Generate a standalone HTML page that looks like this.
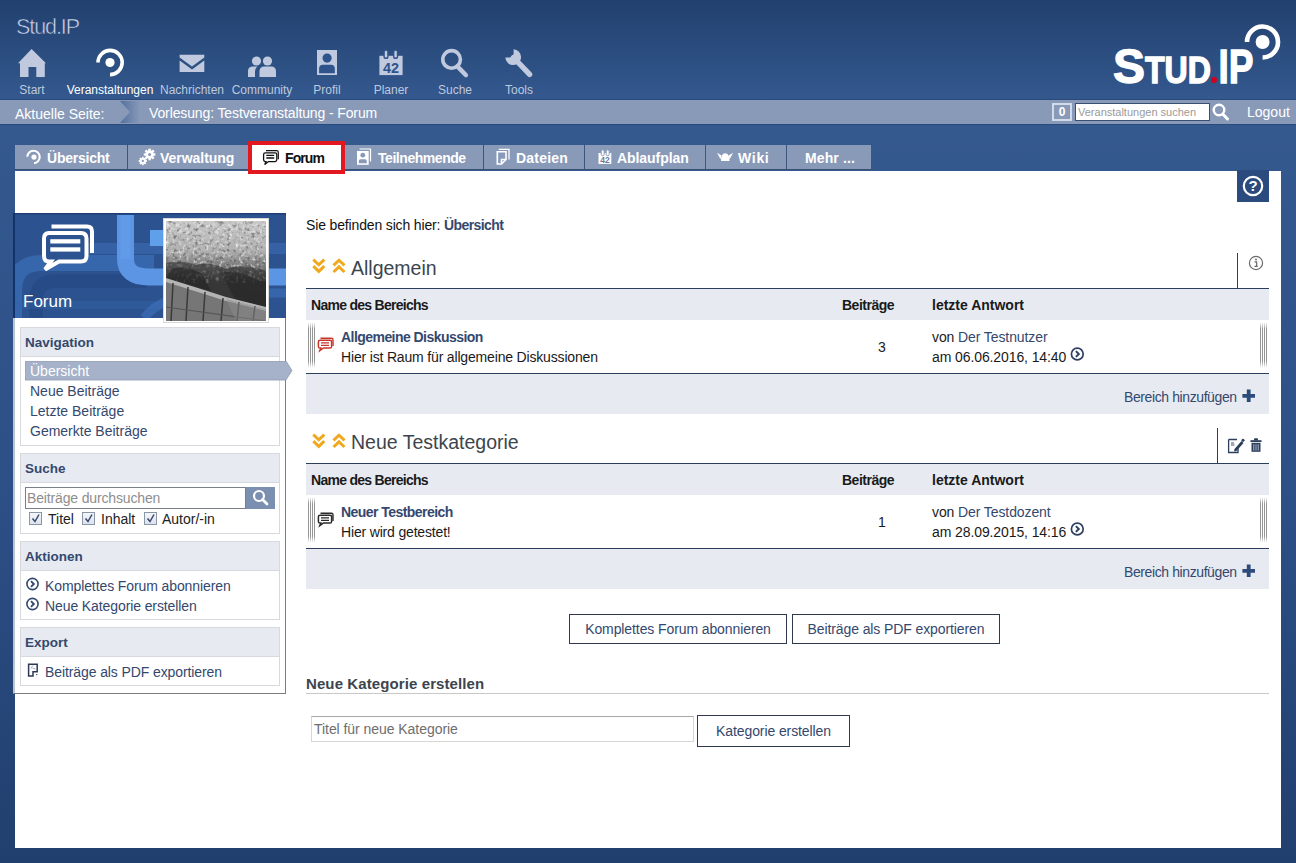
<!DOCTYPE html>
<html><head><meta charset="utf-8">
<style>
*{box-sizing:border-box;margin:0;padding:0}
html,body{width:1296px;height:863px;overflow:hidden}
body{position:relative;font-family:"Liberation Sans",sans-serif;font-size:14px;color:#000;
background:linear-gradient(to bottom,#21406e 0px,#34598f 100px,#34598f 124px,#2c4f86 500px,#213f6e 863px);}
.abs{position:absolute}
#bar{left:0;top:99px;width:1296px;height:26px;background:#899ab9;border-top:1px solid #2b4a7c;border-bottom:1px solid #2b4a7c}
.wt{color:#fff}
#content{left:15px;top:171px;width:1266px;height:677px;background:#fff}
.nav{position:absolute;top:0;text-align:center;color:#c3cce0;font-size:12px}
.navlbl{position:absolute;top:83px;font-size:12px;color:#bfc9de;white-space:nowrap;transform:translateX(-50%)}
.tab{position:absolute;top:145px;height:25px;background:#899ab9;color:#fff;font-weight:bold;font-size:14px;letter-spacing:-0.45px;border-bottom:1px solid #3b4f75}
.tab span{position:absolute;top:5px;white-space:nowrap}
.tsep{position:absolute;top:145px;width:1px;height:25px;background:#3d5580}
.wg{position:absolute;left:20px;width:260px;border:1px solid #d6d9de;background:#fff}
.wgh{height:29px;background:#e7ebf1;border-bottom:1px solid #d6d9de;color:#34486e;font-weight:bold;font-size:13.5px;padding:7px 0 0 4px}
.lnk{color:#34486e}
.th{position:absolute;font-weight:bold;font-size:13.5px;color:#1a1a1a;white-space:nowrap}
.t{position:absolute;white-space:nowrap}
.btn{border:1px solid #2f3a4f;background:#fff;color:#34486e;font-size:14px;letter-spacing:-0.1px;text-align:center;line-height:28px;white-space:nowrap}
.cb{width:13px;height:13px;border:1px solid #8a96a8;background:linear-gradient(#f4f6f9,#dde3ec)}
</style></head>
<body>
<!-- header -->
<svg class="abs" style="left:0;top:0" width="1296" height="100" viewBox="0 0 1296 100">
 <g fill="#c0c9de">
  <!-- home -->
  <path d="M31.6 49 L18 63.3 L20 63.3 L20 77 L28.5 77 L28.5 67 L36.3 67 L36.3 77 L44.8 77 L44.8 63.3 L46 63.3 Z"/>
  <!-- mail -->
  <path d="M179.6 54.7 H204.3 V57.5 L192 66.5 L179.6 57.5 Z"/>
  <path d="M179.6 60.5 L192 69.5 L204.3 60.5 V72 H179.6 Z"/>
  <!-- community -->
  <circle cx="256.5" cy="61" r="4.6"/>
  <circle cx="267.5" cy="61" r="4.6"/>
  <path d="M248 77 V71 Q248 66.5 253 66.5 H257.5 Q255 68 255 72 V77 Z"/>
  <path d="M259.5 77 V71.5 Q259.5 66.5 264.5 66.5 H271 Q276 66.5 276 71.5 V77 Z"/>
  <!-- profil -->
  <rect x="317" y="50" width="20" height="25"/>
  <!-- planer -->
  <rect x="379.4" y="55.8" width="23.2" height="19.3"/>
  <!-- suche -->
  <circle cx="451.6" cy="59.4" r="8.8" fill="none" stroke="#c0c9de" stroke-width="3.6"/>
  <path d="M457.5 66.5 L465.8 75" stroke="#c0c9de" stroke-width="4.6" stroke-linecap="round"/>
  <!-- tools -->
  <path d="M513.5 57.5 L529.6 74.3" stroke="#c0c9de" stroke-width="5.4" stroke-linecap="round"/>
  <path d="M513.6 49.3 A7.9 7.9 0 1 1 505.3 57.6 L510.2 57.6 L513.6 54.2 Z"/>
 </g>
 <g fill="#2f548b">
  <circle cx="327.1" cy="58.1" r="4.6"/>
  <path d="M319.1 73.2 V68.5 Q319.1 64.7 323 64.7 H331 Q334.8 64.7 334.8 68.5 V73.2 Z"/>
  <rect x="383.4" y="49.5" width="5.2" height="9.5" rx="2.6"/>
  <rect x="393" y="49.5" width="5.2" height="9.5" rx="2.6"/>
 </g>
 <g fill="#c0c9de">
  <rect x="384.8" y="50.8" width="2.4" height="6.7" rx="1.2"/>
  <rect x="394.4" y="50.8" width="2.4" height="6.7" rx="1.2"/>
 </g>
 <text x="391" y="72.8" font-family="Liberation Sans" font-weight="bold" font-size="14" fill="#2f548b" text-anchor="middle" textLength="16" lengthAdjust="spacingAndGlyphs">42</text>
 <!-- veranstaltungen ring -->
 <path d="M98 62.5 A12.1 12.1 0 1 1 110 74.6" fill="none" stroke="#fff" stroke-width="3.6"/>
 <circle cx="110" cy="62.5" r="4.6" fill="#fff"/>
 <!-- logo -->
 <g fill="#fff" stroke="#fff" stroke-width="1.3" font-family="Liberation Sans" font-weight="bold">
  <text x="1113" y="83.3" font-size="48" textLength="32" lengthAdjust="spacingAndGlyphs">S</text>
  <text x="1145" y="83.3" font-size="36.5" textLength="66" lengthAdjust="spacingAndGlyphs">TUD</text>
  <text x="1218.5" y="83.3" font-size="48" textLength="35" lengthAdjust="spacingAndGlyphs">IP</text>
 </g>
 <circle cx="1214" cy="80" r="3" fill="#d0021b"/>
 <path d="M1247 42 A15.5 15.5 0 1 1 1262.6 57.5" fill="none" stroke="#fff" stroke-width="4.6"/>
 <circle cx="1262.6" cy="42" r="7" fill="#fff"/>
</svg>

<svg class="abs" style="left:0;top:0" width="120" height="45" viewBox="0 0 120 45"><text x="16" y="34" font-family="Liberation Sans" font-size="21.5" fill="#d0d8ea" stroke="#27477c" stroke-width="0.55" textLength="64" lengthAdjust="spacing">Stud.IP</text></svg>

<div class="navlbl" style="left:32px">Start</div>
<div class="navlbl" style="left:110px;color:#fff">Veranstaltungen</div>
<div class="navlbl" style="left:192px">Nachrichten</div>
<div class="navlbl" style="left:262px">Community</div>
<div class="navlbl" style="left:327px">Profil</div>
<div class="navlbl" style="left:391px">Planer</div>
<div class="navlbl" style="left:455px">Suche</div>
<div class="navlbl" style="left:519px">Tools</div>

<div id="bar" class="abs"></div>
<div class="abs wt" style="left:15px;top:106px;font-size:14px">Aktuelle Seite:</div>
<div class="abs wt" style="left:149px;top:105px;font-size:14px;letter-spacing:-0.12px">Vorlesung: Testveranstaltung - Forum</div>

<!-- bar chevron -->
<svg class="abs" style="left:118px;top:101px" width="22" height="22" viewBox="0 0 22 22">
 <defs><linearGradient id="chg" x1="0" x2="1" y1="0" y2="0"><stop offset="0" stop-color="#4e6b9c"/><stop offset="1" stop-color="#899ab9"/></linearGradient></defs>
 <rect x="0" y="0" width="22" height="22" fill="url(#chg)"/>
 <path d="M0 0 L2 0 L12 11 L2 22 L0 22 Z" fill="#899ab9"/>
</svg>
<div class="abs" style="left:1052px;top:103px;width:20px;height:18px;border:2px solid #d3dbeb;color:#fff;font-size:12px;font-weight:bold;text-align:center;line-height:15px">0</div>
<div class="abs" style="left:1075px;top:103px;width:135px;height:18px;border:1px solid #3a4f74;background:#fff;color:#9a9a9a;font-size:11px;line-height:16px;padding-left:2px;white-space:nowrap;overflow:hidden">Veranstaltungen suchen</div>
<svg class="abs" style="left:1212px;top:103px" width="18" height="19" viewBox="0 0 18 19">
 <circle cx="7" cy="7" r="5.3" fill="none" stroke="#fff" stroke-width="2.4"/>
 <path d="M10.8 11 L15.5 16" stroke="#fff" stroke-width="3" stroke-linecap="round"/>
</svg>
<div class="abs wt" style="left:1247px;top:104px;font-size:14px">Logout</div>

<!-- tabs -->
<div class="tab" style="left:15px;width:113px"><span style="left:32px;letter-spacing:-0.23px">Übersicht</span></div>
<div class="tab" style="left:128px;width:120px"><span style="left:32px;letter-spacing:-0.03px">Verwaltung</span></div>
<div class="tab" style="left:345px;width:139px"><span style="left:33px">Teilnehmende</span></div>
<div class="tab" style="left:484px;width:101px"><span style="left:32px;letter-spacing:0.22px">Dateien</span></div>
<div class="tab" style="left:585px;width:121px"><span style="left:32px;letter-spacing:-0.06px">Ablaufplan</span></div>
<div class="tab" style="left:706px;width:81px"><span style="left:32px;letter-spacing:0.7px">Wiki</span></div>
<div class="tab" style="left:787px;width:84px"><span style="left:18px;letter-spacing:0.12px">Mehr ...</span></div>
<div class="tsep" style="left:127px"></div>
<div class="tsep" style="left:483px"></div>
<div class="tsep" style="left:584px"></div>
<div class="tsep" style="left:705px"></div>
<div class="tsep" style="left:786px"></div>

<div id="content" class="abs"></div>


<!-- sidebar -->
<div class="abs" style="left:13px;top:214px;width:273px;height:480px;background:#fff;border-right:1px solid #7d7d7d;border-bottom:1px solid #7d7d7d"></div>
<div class="abs" style="left:13px;top:318px;width:2px;height:375px;background:#bcc4d0"></div>
<svg class="abs" style="left:13px;top:213px" width="273" height="105" viewBox="-1 0 273 105">
 <defs>
  <filter id="nz"><feTurbulence type="fractalNoise" baseFrequency="0.22" numOctaves="3" seed="7"/><feColorMatrix type="matrix" values="0 0 0 0 0  0 0 0 0 0  0 0 0 0 0  -2.2 0 0 0 1.25"/></filter>
  <linearGradient id="pg" x1="0" y1="0" x2="0" y2="1">
   <stop offset="0" stop-color="#c9c9c9"/><stop offset="0.25" stop-color="#b0b0b0"/><stop offset="0.5" stop-color="#6a6a6a"/><stop offset="0.72" stop-color="#303030"/><stop offset="1" stop-color="#2a2a2a"/>
  </linearGradient>
 </defs>
 <rect x="0" y="0" width="272" height="105" fill="#2c5390"/>
 <rect x="0" y="0" width="272" height="1.5" fill="#1f3f74"/>
 <!-- lower-left rounded band -->
 <path d="M0 105 V78 Q0 50 28 50 H140" fill="none" stroke="#3a6cb6" stroke-width="16" opacity="0.75"/>
 <path d="M22 105 V88 Q22 68 42 68 H132" fill="none" stroke="#274a86" stroke-width="14" opacity="0.9"/>
 <!-- horizontal bands -->
 <rect x="60" y="30" width="212" height="11" fill="#3b69ae" opacity="0.7"/>
 <rect x="0" y="88" width="150" height="8" fill="#3366b0" opacity="0.35"/>
 <!-- light U -->
 <path d="M111.5 2 V46 Q111.5 64 135 64 H272" fill="none" stroke="#5b95e3" stroke-width="17"/>
 <path d="M111.5 2 V46" fill="none" stroke="#68a2ee" stroke-width="10" opacity="0.5"/>
 <rect x="136" y="17" width="16" height="16" fill="#60a0ea"/>
 <path d="M130 105 Q150 80 200 80 H272" fill="none" stroke="#3f72bf" stroke-width="9" opacity="0.6"/>
 <rect x="-1" y="0" width="2" height="105" fill="#13316a"/>
 <!-- forum icon big -->
 <g fill="none" stroke="#fff">
  <path d="M37.5 13.6 H73 Q78 13.6 78 18.6 V40" stroke-width="4"/>
  <path d="M35 20 H67 Q72.5 20 72.5 25.5 V43 Q72.5 48.5 67 48.5 H45 L31 56.5 L37 48.5 H35 Q30 48.5 30 43 V25.5 Q30 20 35 20 Z" stroke-width="4" fill="#2c5390"/>
 </g>
 <rect x="36.3" y="26.2" width="30" height="4.3" fill="#fff"/>
 <rect x="36.3" y="34.3" width="30" height="4.3" fill="#fff"/>
 <text x="9" y="93.8" font-family="Liberation Sans" font-size="17" fill="#fff">Forum</text>
</svg>
<!-- photo -->
<div class="abs" style="left:163px;top:218px;width:106px;height:105px;background:#fff;border:1px solid #d8d8d8"></div>
<svg class="abs" style="left:166px;top:221px" width="100" height="100" viewBox="0 0 100 100">
 <defs>
  <linearGradient id="pg2" x1="0" y1="0" x2="0" y2="1">
   <stop offset="0" stop-color="#c8c8c8"/><stop offset="0.3" stop-color="#b0b0b0"/><stop offset="0.45" stop-color="#7a7a7a"/><stop offset="0.6" stop-color="#474747"/><stop offset="1" stop-color="#3c3c3c"/>
  </linearGradient>
  <filter id="nzd" x="0" y="0" width="100%" height="100%"><feTurbulence type="fractalNoise" baseFrequency="0.28" numOctaves="2" seed="11"/><feColorMatrix type="matrix" values="0 0 0 0 0.05  0 0 0 0 0.05  0 0 0 0 0.05  -3 0 0 0 1.45"/></filter>
  <filter id="nzl" x="0" y="0" width="100%" height="100%"><feTurbulence type="fractalNoise" baseFrequency="0.3" numOctaves="2" seed="3"/><feColorMatrix type="matrix" values="0 0 0 0 0.95  0 0 0 0 0.95  0 0 0 0 0.95  3 0 0 0 -1.55"/></filter>
 </defs>
 <rect width="100" height="100" fill="url(#pg2)"/>
 <rect width="100" height="100" filter="url(#nzd)" opacity="0.6"/>
 <rect width="100" height="62" filter="url(#nzl)" opacity="0.7"/>
 <!-- dark people band -->
 <path d="M0 42 Q15 38 30 44 Q45 40 60 48 Q75 42 100 50 V90 L60 76 L30 68 L0 60 Z" fill="#2b2b2b" opacity="0.55"/>
 <path d="M5 48 Q20 44 35 52 L45 70 L0 58 Z" fill="#1e1e1e" opacity="0.5"/>
 <path d="M55 52 Q70 48 85 56 Q95 62 100 60 V88 L70 80 Z" fill="#1e1e1e" opacity="0.45"/>
 <!-- seat wall -->
 <path d="M0 59 L35 70 L60 78 L100 88 V100 H0 Z" fill="#767676"/>
 <path d="M0 57 L35 68 L60 76 L100 86 V90 L60 80 L35 72 L0 61 Z" fill="#b4b4b4"/>
 <g stroke="#3a3a3a" stroke-width="1.5"><path d="M7 62 L5 100 M22 66 L20 100 M39 71 L37 100 M57 77 L55 100 M73 81 L71 100 M89 85 L87 100"/></g>
 <path d="M0 86 L100 100" stroke="#555" stroke-width="1.2"/>
 <path d="M60 78 L100 88 V100 H70 Z" fill="#8c8c8c" opacity="0.5"/>
</svg>
<!-- widgets -->
<div class="wg" style="top:327px;height:119px">
 <div class="wgh">Navigation</div>
</div>
<svg class="abs" style="left:25px;top:361px" width="268" height="20" viewBox="0 0 268 20">
 <path d="M0 0 H261 L267 9.5 L261 19 H0 Z" fill="#a5b2c9" stroke="#8d9bb4" stroke-width="0.8"/>
</svg>
<div class="t" style="left:30px;top:363px;color:#fff;font-size:14px">Übersicht</div>
<div class="t lnk" style="left:30px;top:383px;font-size:14px">Neue Beiträge</div>
<div class="t lnk" style="left:30px;top:403px;font-size:14px">Letzte Beiträge</div>
<div class="t lnk" style="left:30px;top:423px;font-size:14px">Gemerkte Beiträge</div>

<div class="wg" style="top:453px;height:81px">
 <div class="wgh">Suche</div>
</div>
<div class="abs" style="left:25px;top:487px;width:221px;height:22px;border:1px solid #7a7f88;background:#fff;color:#8e8e8e;font-size:14px;letter-spacing:-0.15px;line-height:21px;padding-left:1px;white-space:nowrap">Beiträge durchsuchen</div>
<div class="abs" style="left:246px;top:487px;width:29px;height:22px;background:#7b8fb0"></div>
<svg class="abs" style="left:246px;top:487px" width="29" height="22" viewBox="0 0 29 22">
 <circle cx="13" cy="9" r="5" fill="none" stroke="#fff" stroke-width="2.2"/>
 <path d="M16.5 12.5 L21 17" stroke="#fff" stroke-width="2.8" stroke-linecap="round"/>
</svg>
<div class="abs cb" style="left:29px;top:512px"></div>
<div class="abs cb" style="left:82px;top:512px"></div>
<div class="abs cb" style="left:144px;top:512px"></div>
<svg class="abs" style="left:0;top:510px" width="200" height="18" viewBox="0 510 200 18">
 <g fill="none" stroke="#34486e" stroke-width="1.5"><path d="M32.5 518.5 L35 521.5 L39 514.5"/><path d="M85.5 518.5 L88 521.5 L92 514.5"/><path d="M147.5 518.5 L150 521.5 L154 514.5"/></g>
</svg>
<div class="t" style="left:48px;top:511px;font-size:14px;color:#222">Titel</div>
<div class="t" style="left:101px;top:511px;font-size:14px;color:#222">Inhalt</div>
<div class="t" style="left:162px;top:511px;font-size:14px;color:#222">Autor/-in</div>

<div class="wg" style="top:541px;height:79px">
 <div class="wgh">Aktionen</div>
</div>
<div class="t lnk" style="left:45px;top:578px;font-size:14px;letter-spacing:-0.1px">Komplettes Forum abonnieren</div>
<div class="t lnk" style="left:45px;top:598px;font-size:14px;letter-spacing:-0.1px">Neue Kategorie erstellen</div>
<svg class="abs" style="left:25px;top:577px" width="16" height="36" viewBox="0 0 16 36">
 <g fill="none" stroke="#34496e" stroke-width="1.6">
  <circle cx="7.5" cy="7" r="5.6"/><path d="M6 4.2 L8.8 7 L6 9.8" stroke-width="1.9"/>
  <circle cx="7.5" cy="27" r="5.6"/><path d="M6 24.2 L8.8 27 L6 29.8" stroke-width="1.9"/>
 </g>
</svg>

<div class="wg" style="top:627px;height:59px">
 <div class="wgh">Export</div>
</div>
<div class="t lnk" style="left:45px;top:664px;font-size:14px;letter-spacing:-0.1px">Beiträge als PDF exportieren</div>
<svg class="abs" style="left:26px;top:662px" width="14" height="16" viewBox="0 0 14 16">
 <path d="M2.6 2.2 H11.2 V9.8 H7 V14 H2.6 Z" fill="none" stroke="#2e3a55" stroke-width="1.5"/>
 <path d="M5 6.5 Q6.5 4 7 3.5 M6.5 6 Q8 6.5 9.5 7" fill="none" stroke="#8a93a6" stroke-width="0.8"/>
 <path d="M10.2 12 L11.8 12 L10.2 13.6 Z" fill="#2e3a55"/>
</svg>

<!-- main -->
<div class="t" style="left:306px;top:217px;font-size:14px;letter-spacing:-0.15px;color:#111">Sie befinden sich hier: <b style="color:#34486e;font-size:14px;letter-spacing:-0.6px">Übersicht</b></div>

<!-- category Allgemein -->
<svg class="abs" style="left:310px;top:257px" width="40" height="20" viewBox="0 0 40 20">
 <g fill="none" stroke="#f0a91e" stroke-width="3" stroke-linejoin="miter">
  <path d="M3.3 2.6 L8.8 7.8 L14.3 2.6 M3.3 9.2 L8.8 14.4 L14.3 9.2"/>
  <path d="M23.5 8.4 L29 3.2 L34.5 8.4 M23.5 15 L29 9.8 L34.5 15"/>
 </g>
</svg>
<div class="t" style="left:351px;top:257px;font-size:19.5px;color:#3c454e">Allgemein</div>
<div class="abs" style="left:1237px;top:253px;width:1px;height:35px;background:#2c3e5c"></div>
<svg class="abs" style="left:1248px;top:255px" width="16" height="16" viewBox="0 0 16 16">
 <circle cx="8" cy="8" r="6.6" fill="none" stroke="#6e6e6e" stroke-width="1.2"/>
 <circle cx="8" cy="4.6" r="1" fill="#6e6e6e"/>
 <path d="M6.4 6.8 H8.6 V11.4 H9.6 M6.4 11.4 H9.8" fill="none" stroke="#6e6e6e" stroke-width="1.3"/>
</svg>
<div class="abs" style="left:306px;top:288px;width:963px;height:1px;background:#2c3e5c"></div>
<div class="abs" style="left:306px;top:289px;width:963px;height:31px;background:#e7ebf1"></div>
<div class="th" style="left:311px;top:297px;font-size:14px;letter-spacing:-0.72px">Name des Bereichs</div>
<div class="th" style="left:842px;top:297px;font-size:14px;letter-spacing:-0.5px">Beiträge</div>
<div class="th" style="left:932px;top:297px;font-size:14px">letzte Antwort</div>
<svg class="abs" style="left:307px;top:321px" width="10" height="50" viewBox="0 0 10 50">
 <defs><linearGradient id="hg" x1="0" y1="0" x2="0" y2="1"><stop offset="0" stop-color="#fff"/><stop offset="0.15" stop-color="#888"/><stop offset="0.85" stop-color="#888"/><stop offset="1" stop-color="#fff"/></linearGradient></defs><g stroke="url(#hg)" stroke-width="0.9"><path d="M1.5 1 V47 M3.5 1 V47 M5.5 1 V47 M7.5 1 V47"/></g>
</svg>
<svg class="abs" style="left:1259px;top:321px" width="10" height="50" viewBox="0 0 10 50">
 <defs><linearGradient id="hg" x1="0" y1="0" x2="0" y2="1"><stop offset="0" stop-color="#fff"/><stop offset="0.15" stop-color="#888"/><stop offset="0.85" stop-color="#888"/><stop offset="1" stop-color="#fff"/></linearGradient></defs><g stroke="url(#hg)" stroke-width="0.9"><path d="M1.5 1 V47 M3.5 1 V47 M5.5 1 V47 M7.5 1 V47"/></g>
</svg>
<svg class="abs" style="left:316px;top:336px" width="20" height="18" viewBox="0 0 20 18">
 <g fill="none" stroke="#c8372a" stroke-width="1.5">
  <path d="M4.5 2.3 H15.5 Q17 2.3 17 3.8 V10" stroke-width="1.4"/>
  <path d="M4 4.2 H14 Q15.6 4.2 15.6 5.8 V10.4 Q15.6 12 14 12 H7.5 L3.8 14.6 L4.8 12 H4 Q2.4 12 2.4 10.4 V5.8 Q2.4 4.2 4 4.2 Z" fill="#fff"/>
  <path d="M5 6.9 H13 M5 9.3 H13" stroke-width="1.3"/>
 </g>
</svg>
<div class="t" style="left:341px;top:329px;font-weight:bold;font-size:14px;letter-spacing:-0.55px;color:#34486e">Allgemeine Diskussion</div>
<div class="t" style="left:341px;top:349px;font-size:14px;letter-spacing:-0.17px;color:#1a1a1a">Hier ist Raum für allgemeine Diskussionen</div>
<div class="t" style="left:878px;top:339px;font-size:14px;color:#1a1a1a">3</div>
<div class="t" style="left:932px;top:329px;font-size:14px;letter-spacing:-0.1px;color:#1a1a1a">von <span style="color:#34486e">Der Testnutzer</span></div>
<div class="t" style="left:932px;top:349px;font-size:14px;letter-spacing:-0.1px;color:#1a1a1a">am 06.06.2016, 14:40</div>
<svg class="abs" style="left:1069px;top:346px" width="16" height="16" viewBox="0 0 16 16">
 <g fill="none" stroke="#2e3f62" stroke-width="1.7"><circle cx="8.3" cy="8" r="5.9"/><path d="M6.9 5.1 L9.8 8 L6.9 10.9" stroke-width="2"/></g>
</svg>
<div class="abs" style="left:306px;top:373px;width:963px;height:1px;background:#2c3e5c"></div>
<div class="abs" style="left:306px;top:374px;width:963px;height:40px;background:#e7ebf1"></div>
<div class="t" style="left:1124px;top:389px;font-size:14px;letter-spacing:-0.4px;color:#34486e">Bereich hinzufügen</div>
<svg class="abs" style="left:1241px;top:388px" width="16" height="16" viewBox="0 0 16 16">
 <path d="M5.8 1.5 H9.6 V5.9 H14 V9.7 H9.6 V14.1 H5.8 V9.7 H1.4 V5.9 H5.8 Z" fill="#2c4a7c"/>
</svg>

<!-- category Neue Testkategorie -->
<svg class="abs" style="left:310px;top:432px" width="40" height="20" viewBox="0 0 40 20">
 <g fill="none" stroke="#f0a91e" stroke-width="3" stroke-linejoin="miter">
  <path d="M3.3 2.6 L8.8 7.8 L14.3 2.6 M3.3 9.2 L8.8 14.4 L14.3 9.2"/>
  <path d="M23.5 8.4 L29 3.2 L34.5 8.4 M23.5 15 L29 9.8 L34.5 15"/>
 </g>
</svg>
<div class="t" style="left:351px;top:431px;font-size:19.5px;color:#3c454e">Neue Testkategorie</div>
<div class="abs" style="left:1217px;top:428px;width:1px;height:35px;background:#2c3e5c"></div>
<svg class="abs" style="left:1227px;top:437px" width="38" height="18" viewBox="0 0 38 18">
 <g fill="none" stroke="#2c3e5c" stroke-width="1.3">
  <path d="M1.6 2.5 H10 M1.6 2.5 V15.5 H11 V11"/>
  <path d="M4 6 H7 M4 8 H7.5" stroke-width="0.9"/>
 </g>
 <path d="M7.5 12 L14.5 4 L16.5 6 L9.5 14 L7 14.5 Z" fill="#2c3e5c"/>
 <circle cx="16" cy="3.3" r="1.5" fill="#2c3e5c"/>
 <g fill="#2c3e5c">
  <rect x="23.5" y="3.2" width="11" height="1.8"/>
  <rect x="27" y="1.3" width="4" height="2.2" rx="0.8"/>
  <path d="M24.5 5.8 H33.5 V14.8 H24.5 Z"/>
 </g>
 <g fill="#a9b6cb"><rect x="26.3" y="7.2" width="1" height="6.4"/><rect x="28.5" y="7.2" width="1" height="6.4"/><rect x="30.7" y="7.2" width="1" height="6.4"/></g>
</svg>
<div class="abs" style="left:306px;top:463px;width:963px;height:1px;background:#2c3e5c"></div>
<div class="abs" style="left:306px;top:464px;width:963px;height:31px;background:#e7ebf1"></div>
<div class="th" style="left:311px;top:472px;font-size:14px;letter-spacing:-0.72px">Name des Bereichs</div>
<div class="th" style="left:842px;top:472px;font-size:14px;letter-spacing:-0.5px">Beiträge</div>
<div class="th" style="left:932px;top:472px;font-size:14px">letzte Antwort</div>
<svg class="abs" style="left:307px;top:496px" width="10" height="50" viewBox="0 0 10 50">
 <defs><linearGradient id="hg" x1="0" y1="0" x2="0" y2="1"><stop offset="0" stop-color="#fff"/><stop offset="0.15" stop-color="#888"/><stop offset="0.85" stop-color="#888"/><stop offset="1" stop-color="#fff"/></linearGradient></defs><g stroke="url(#hg)" stroke-width="0.9"><path d="M1.5 1 V47 M3.5 1 V47 M5.5 1 V47 M7.5 1 V47"/></g>
</svg>
<svg class="abs" style="left:1259px;top:496px" width="10" height="50" viewBox="0 0 10 50">
 <defs><linearGradient id="hg" x1="0" y1="0" x2="0" y2="1"><stop offset="0" stop-color="#fff"/><stop offset="0.15" stop-color="#888"/><stop offset="0.85" stop-color="#888"/><stop offset="1" stop-color="#fff"/></linearGradient></defs><g stroke="url(#hg)" stroke-width="0.9"><path d="M1.5 1 V47 M3.5 1 V47 M5.5 1 V47 M7.5 1 V47"/></g>
</svg>
<svg class="abs" style="left:316px;top:511px" width="20" height="18" viewBox="0 0 20 18">
 <g fill="none" stroke="#2a2a2a" stroke-width="1.5">
  <path d="M4.5 2.3 H15.5 Q17 2.3 17 3.8 V10" stroke-width="1.4"/>
  <path d="M4 4.2 H14 Q15.6 4.2 15.6 5.8 V10.4 Q15.6 12 14 12 H7.5 L3.8 14.6 L4.8 12 H4 Q2.4 12 2.4 10.4 V5.8 Q2.4 4.2 4 4.2 Z" fill="#fff"/>
  <path d="M5 6.9 H13 M5 9.3 H13" stroke-width="1.3"/>
 </g>
</svg>
<div class="t" style="left:341px;top:504px;font-weight:bold;font-size:14px;letter-spacing:-0.55px;color:#34486e">Neuer Testbereich</div>
<div class="t" style="left:341px;top:524px;font-size:14px;letter-spacing:-0.17px;color:#1a1a1a">Hier wird getestet!</div>
<div class="t" style="left:878px;top:514px;font-size:14px;color:#1a1a1a">1</div>
<div class="t" style="left:932px;top:504px;font-size:14px;letter-spacing:-0.1px;color:#1a1a1a">von <span style="color:#34486e">Der Testdozent</span></div>
<div class="t" style="left:932px;top:524px;font-size:14px;letter-spacing:-0.1px;color:#1a1a1a">am 28.09.2015, 14:16</div>
<svg class="abs" style="left:1069px;top:521px" width="16" height="16" viewBox="0 0 16 16">
 <g fill="none" stroke="#2e3f62" stroke-width="1.7"><circle cx="8.3" cy="8" r="5.9"/><path d="M6.9 5.1 L9.8 8 L6.9 10.9" stroke-width="2"/></g>
</svg>
<div class="abs" style="left:306px;top:548px;width:963px;height:1px;background:#2c3e5c"></div>
<div class="abs" style="left:306px;top:549px;width:963px;height:40px;background:#e7ebf1"></div>
<div class="t" style="left:1124px;top:564px;font-size:14px;letter-spacing:-0.4px;color:#34486e">Bereich hinzufügen</div>
<svg class="abs" style="left:1241px;top:563px" width="16" height="16" viewBox="0 0 16 16">
 <path d="M5.8 1.5 H9.6 V5.9 H14 V9.7 H9.6 V14.1 H5.8 V9.7 H1.4 V5.9 H5.8 Z" fill="#2c4a7c"/>
</svg>

<div class="abs btn" style="left:569px;top:614px;width:218px;height:30px">Komplettes Forum abonnieren</div>
<div class="abs btn" style="left:792px;top:614px;width:208px;height:30px">Beiträge als PDF exportieren</div>
<div class="t" style="left:306px;top:675px;font-size:15px;letter-spacing:0.1px;font-weight:bold;color:#3c454e">Neue Kategorie erstellen</div>
<div class="abs" style="left:306px;top:693px;width:963px;height:1px;background:#c8c8c8"></div>
<div class="abs" style="left:311px;top:716px;width:383px;height:26px;border:1px solid #d6d6d6;border-top-color:#a8a8a8;color:#6e6e6e;font-size:14px;letter-spacing:-0.05px;line-height:24px;padding-left:2px">Titel für neue Kategorie</div>
<div class="abs btn" style="left:697px;top:715px;width:153px;height:32px;line-height:30px">Kategorie erstellen</div>
<!-- active tab -->
<div class="abs" style="left:248px;top:141px;width:97px;height:33px;border:4.5px solid #e3171f;background:#fff"></div>
<div class="abs" style="left:285px;top:150px;font-weight:bold;font-size:14px;letter-spacing:-0.9px;color:#111">Forum</div>


<!-- tab icons -->
<svg class="abs" style="left:0;top:140px" width="900" height="35" viewBox="0 140 900 35">
 <g fill="#fff" stroke="none">
  <path d="M27.3 156.8 A6.2 6.2 0 1 1 34 163.2" fill="none" stroke="#fff" stroke-width="2.1"/>
  <circle cx="34" cy="157.1" r="2.6"/>
  <!-- gears -->
  <g transform="translate(149.6 154.5)">
   <circle r="4.2"/>
   <g id="teeth"><rect x="-1.2" y="-5.8" width="2.4" height="11.6"/><rect x="-1.2" y="-5.8" width="2.4" height="11.6" transform="rotate(45)"/><rect x="-1.2" y="-5.8" width="2.4" height="11.6" transform="rotate(90)"/><rect x="-1.2" y="-5.8" width="2.4" height="11.6" transform="rotate(135)"/></g>
   <circle r="1.5" fill="#899ab9"/>
  </g>
  <g transform="translate(142.8 161) scale(0.72)">
   <circle r="4.2"/>
   <rect x="-1.2" y="-5.8" width="2.4" height="11.6"/><rect x="-1.2" y="-5.8" width="2.4" height="11.6" transform="rotate(45)"/><rect x="-1.2" y="-5.8" width="2.4" height="11.6" transform="rotate(90)"/><rect x="-1.2" y="-5.8" width="2.4" height="11.6" transform="rotate(135)"/>
   <circle r="1.6" fill="#899ab9"/>
  </g>
  <!-- teilnehmende -->
  <path d="M359.5 149 H370.5 V161.5" fill="none" stroke="#fff" stroke-width="1.2"/>
  <rect x="357" y="151" width="11.7" height="13.8"/>
  <circle cx="362.8" cy="155.2" r="2.4" fill="#899ab9"/>
  <path d="M358.8 163.3 V161 Q358.8 159.3 360.5 159.3 H365 Q366.8 159.3 366.8 161 V163.3 Z" fill="#899ab9"/>
  <!-- dateien -->
  <path d="M498.8 149.3 H509 V159.5" fill="none" stroke="#fff" stroke-width="1.3"/>
  <path d="M497.3 151.8 H506 V159.5 L501.5 164 H497.3 Z" fill="none" stroke="#fff" stroke-width="1.6"/>
  <path d="M501.5 164 V159.5 H506" fill="none" stroke="#fff" stroke-width="1.6"/>
  <!-- ablaufplan -->
  <path d="M598.5 153 H611.3 V163.9 H598.5 Z"/>
  <rect x="601.2" y="149.8" width="3" height="6" rx="1.5" stroke="#899ab9" stroke-width="1"/>
  <rect x="606.2" y="149.8" width="3" height="6" rx="1.5" stroke="#899ab9" stroke-width="1"/>
  <text x="605" y="163" font-family="Liberation Sans" font-weight="bold" font-size="8.5" fill="#6b7a96" text-anchor="middle">42</text>
  <!-- wiki -->
  <path d="M721 161 Q721 153.3 725.2 153.3 Q729.5 153.3 729.5 161 Z"/>
  <path d="M717 152.8 L721.5 155.5 L720.5 159.3 Z"/>
  <path d="M733 152.8 L728.7 155.5 L729.7 159.3 Z"/>
 </g>
 <!-- forum (active) -->
 <g fill="none" stroke="#111" stroke-width="1.3">
  <path d="M266 150.6 H276.5 Q278.3 150.6 278.3 152.4 V159.2" stroke-width="1.2"/>
  <path d="M265.3 152.9 H275 Q276.8 152.9 276.8 154.7 V159.8 Q276.8 161.6 275 161.6 H268.5 L264.7 164.5 L266 161.6 H265.3 Q263.6 161.6 263.6 159.8 V154.7 Q263.6 152.9 265.3 152.9 Z"/>
  <path d="M266.3 155.4 H274.2 M266.3 158 H274.2" stroke-width="1.4"/>
 </g>
</svg>
<!-- help -->
<div class="abs" style="left:1237px;top:170px;width:32px;height:32px;background:#2b4a7d"></div>
<svg class="abs" style="left:1237px;top:170px" width="32" height="32" viewBox="0 0 32 32">
 <circle cx="16" cy="16" r="9.2" fill="none" stroke="#fff" stroke-width="2.2"/>
 <text x="16" y="21.3" font-family="Liberation Sans" font-weight="bold" font-size="15" fill="#fff" text-anchor="middle">?</text>
</svg>
</body></html>
